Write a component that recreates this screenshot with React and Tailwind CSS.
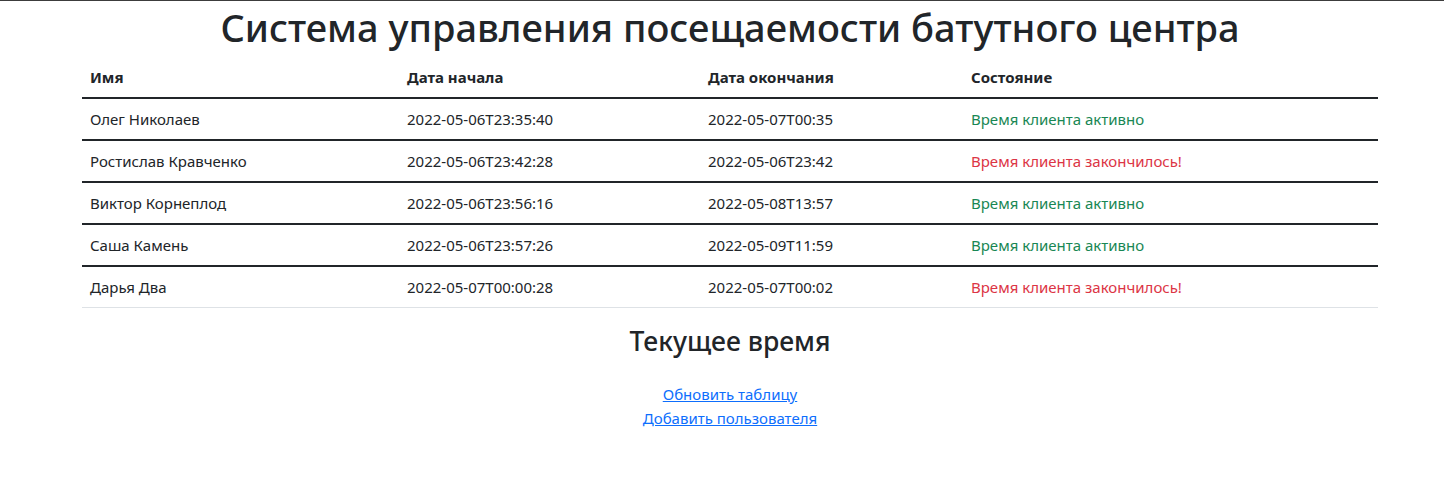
import React from 'react';

const rows = [
    { name: 'Олег Николаев', start: '2022-05-06T23:35:40', end: '2022-05-07T00:35', active: true },
    { name: 'Ростислав Кравченко', start: '2022-05-06T23:42:28', end: '2022-05-06T23:42', active: false },
    { name: 'Виктор Корнеплод', start: '2022-05-06T23:56:16', end: '2022-05-08T13:57', active: true },
    { name: 'Саша Камень', start: '2022-05-06T23:57:26', end: '2022-05-09T11:59', active: true },
    { name: 'Дарья Два', start: '2022-05-07T00:00:28', end: '2022-05-07T00:02', active: false },
];

const App = () => {
    return (
        <div className="min-h-[480px] bg-white border-t border-[#3c3c3c] text-[#212529] font-['Noto_Sans',sans-serif]">
            <div className="w-[1320px] ml-[70px] px-3">
                <h1 className="pt-[3px] text-[38px] leading-[46px] font-medium text-center mb-[7px]">
                    Система управления посещаемости батутного центра
                </h1>

                <table className="w-full text-left text-[15px] leading-6 border-collapse">
                    <thead>
                        <tr className="border-b-2 border-[#212529]">
                            <th className="w-[317px] px-2 py-2 font-bold">Имя</th>
                            <th className="w-[301px] px-2 py-2 font-bold">Дата начала</th>
                            <th className="w-[263px] px-2 py-2 font-bold">Дата окончания</th>
                            <th className="px-2 py-2 font-bold">Состояние</th>
                        </tr>
                    </thead>
                    <tbody>
                        {rows.map((r, i) => (
                            <tr
                                key={r.name}
                                className={i === rows.length - 1 ? 'border-b border-[#dee2e6]' : 'border-b-2 border-[#212529]'}
                            >
                                <td className="px-2 py-2">{r.name}</td>
                                <td className="px-2 py-2">{r.start}</td>
                                <td className="px-2 py-2">{r.end}</td>
                                <td className={`px-2 py-2 ${r.active ? 'text-[#198754]' : 'text-[#dc3545]'}`}>
                                    {r.active ? 'Время клиента активно' : 'Время клиента закончилось!'}
                                </td>
                            </tr>
                        ))}
                    </tbody>
                </table>

                <h3 className="mt-4 text-[26.5px] leading-[34px] font-medium text-center">Текущее время</h3>

                <div className="mt-6 flex flex-col items-center text-[15px] leading-6">
                    <a href="#" className="text-[#0d6efd] underline">Обновить таблицу</a>
                    <a href="#" className="text-[#0d6efd] underline">Добавить пользователя</a>
                </div>
            </div>
        </div>
    );
};

export default App;
